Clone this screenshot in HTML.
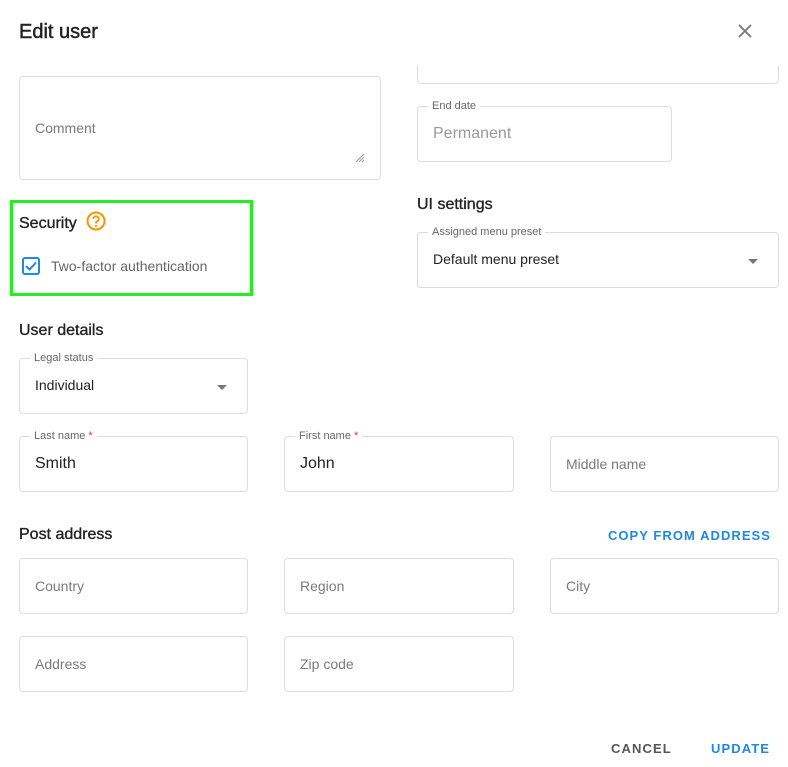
<!DOCTYPE html>
<html><head><meta charset="utf-8"><style>
*{box-sizing:border-box;margin:0;padding:0}
body{width:788px;height:767px;background:#fff;font-family:"Liberation Sans",Arial,sans-serif;position:relative;overflow:hidden;color:#222}
.a{position:absolute}
.box{position:absolute;border:1px solid #dcdcdc;border-radius:4px;background:#fff}
.lbl{position:absolute;top:-8px;left:10px;padding:0 4px;background:#fff;font-size:11px;color:#666;line-height:14px}
.lbl b{color:#e53935;font-weight:normal}
.val{position:absolute;left:15px;font-size:16px;color:#222}
.ph{position:absolute;left:15px;font-size:14px;color:#7a7a7a}
.h{position:absolute;font-size:16px;color:#222;-webkit-text-stroke:0.35px #222}
.arrow{position:absolute;right:20px;top:26px;width:0;height:0;border-left:5px solid transparent;border-right:5px solid transparent;border-top:5px solid #777}
</style></head><body>
<div class="box" style="left:417px;top:30px;width:362px;height:54px"></div>
<div class="a" style="left:0;top:0;width:788px;height:66px;background:#fff"></div>
<div class="a" style="left:19px;top:21px;font-size:20px;color:#222;-webkit-text-stroke:0.45px #222">Edit user</div>
<svg class="a" style="left:737px;top:23px" width="16" height="16" viewBox="0 0 16 16"><path d="M2 2L14 14M14 2L2 14" stroke="#777" stroke-width="1.8"/></svg>

<div class="box" style="left:19px;top:76px;width:362px;height:104px"><div class="ph" style="top:43px">Comment</div>
<svg class="a" style="right:15px;bottom:16px" width="10" height="10" viewBox="0 0 10 10"><path d="M9 1L1 9M9 4L4 9M9 7L7 9" stroke="#999" stroke-width="1"/></svg></div>

<div class="box" style="left:417px;top:106px;width:255px;height:56px"><div class="lbl">End date</div><div class="val" style="top:18px;color:#999">Permanent</div></div>

<div class="h" style="left:417px;top:196px">UI settings</div>
<div class="box" style="left:417px;top:232px;width:362px;height:56px"><div class="lbl">Assigned menu preset</div><div class="val" style="top:18px;font-size:14px">Default menu preset</div><div class="arrow"></div></div>

<div class="a" style="left:10px;top:200px;width:243px;height:96px;border:3px solid #22ee22"></div>
<div class="h" style="left:19px;top:215px">Security</div>
<svg class="a" style="left:86px;top:211px" width="20" height="20" viewBox="0 0 20 20"><circle cx="10" cy="10" r="8.5" fill="none" stroke="#fb9300" stroke-width="2"/><path d="M7.3 8a2.7 2.7 0 1 1 3.7 2.5c-.7.3-1 .8-1 1.5v.5" fill="none" stroke="#fb9300" stroke-width="1.9"/><circle cx="10" cy="15" r="1.1" fill="#fb9300"/></svg>
<svg class="a" style="left:22px;top:257px" width="18" height="18" viewBox="0 0 18 18"><rect x="1" y="1" width="16" height="16" rx="2" fill="none" stroke="#1e88e5" stroke-width="2"/><path d="M4 9l3.5 3.5L14 5.5" fill="none" stroke="#1e88e5" stroke-width="2"/></svg>
<div class="a" style="left:51px;top:258px;font-size:14px;color:#666">Two-factor authentication</div>

<div class="h" style="left:19px;top:322px">User details</div>
<div class="box" style="left:19px;top:358px;width:229px;height:56px"><div class="lbl">Legal status</div><div class="val" style="top:18px;font-size:14px">Individual</div><div class="arrow"></div></div>

<div class="box" style="left:19px;top:436px;width:229px;height:56px"><div class="lbl">Last name <b>*</b></div><div class="val" style="top:18px">Smith</div></div>
<div class="box" style="left:284px;top:436px;width:230px;height:56px"><div class="lbl">First name <b>*</b></div><div class="val" style="top:18px">John</div></div>
<div class="box" style="left:550px;top:436px;width:229px;height:56px"><div class="ph" style="top:19px">Middle name</div></div>

<div class="h" style="left:19px;top:526px">Post address</div>
<div class="a" style="right:17px;top:528px;font-size:13px;font-weight:bold;color:#1e88e5;letter-spacing:1.05px">COPY FROM ADDRESS</div>

<div class="box" style="left:19px;top:558px;width:229px;height:56px"><div class="ph" style="top:19px">Country</div></div>
<div class="box" style="left:284px;top:558px;width:230px;height:56px"><div class="ph" style="top:19px">Region</div></div>
<div class="box" style="left:550px;top:558px;width:229px;height:56px"><div class="ph" style="top:19px">City</div></div>
<div class="box" style="left:19px;top:636px;width:229px;height:56px"><div class="ph" style="top:19px">Address</div></div>
<div class="box" style="left:284px;top:636px;width:230px;height:56px"><div class="ph" style="top:19px">Zip code</div></div>

<div class="a" style="left:611px;top:741px;font-size:13px;font-weight:bold;color:#555;letter-spacing:1.1px">CANCEL</div>
<div class="a" style="left:711px;top:741px;font-size:13px;font-weight:bold;color:#1e88e5;letter-spacing:1.1px">UPDATE</div>
</body></html>
